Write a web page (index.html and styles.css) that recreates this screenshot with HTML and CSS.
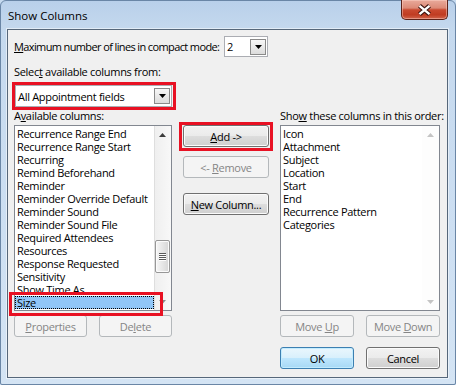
FILE: index.html
```html
<!DOCTYPE html>
<html>
<head>
<meta charset="utf-8">
<title>Show Columns</title>
<link rel="stylesheet" href="styles.css">
</head>
<body>
<div class="window">
  <div class="titlebar">
    <span class="title">Show Columns</span>
    <div class="close">
      <svg width="15" height="12" viewBox="0 0 15 12"><path d="M2.5 1.8 L12.5 10.2 M12.5 1.8 L2.5 10.2" stroke="#3a1410" stroke-width="4.4" fill="none"/><path d="M2.5 1.8 L12.5 10.2 M12.5 1.8 L2.5 10.2" stroke="#fff" stroke-width="2.4" fill="none"/></svg>
    </div>
  </div>
  <div class="client">
    <div class="row-max">
      <span class="lbl max-lbl"><u>M</u>aximum number of lines in compact mode:</span>
      <div class="combo small">
        <span class="val">2</span>
        <span class="dd"><svg width="7" height="4" viewBox="0 0 7 4"><path d="M0 0 H7 L3.5 4 Z" fill="#000"/></svg></span>
      </div>
    </div>
    <div class="lbl sel-lbl">Selec<u>t</u> available columns from:</div>
    <div class="combo wide hl hl-combo">
      <span class="val">All Appointment fields</span>
      <span class="dd"><svg width="7" height="4" viewBox="0 0 7 4"><path d="M0 0 H7 L3.5 4 Z" fill="#000"/></svg></span>
    </div>
    <div class="cols">
      <div class="col">
        <div class="lbl col-lbl">A<u>v</u>ailable columns:</div>
        <div class="list">
          <ul class="items">
            <li>Recurrence Range End</li>
            <li>Recurrence Range Start</li>
            <li>Recurring</li>
            <li>Remind Beforehand</li>
            <li>Reminder</li>
            <li>Reminder Override Default</li>
            <li>Reminder Sound</li>
            <li>Reminder Sound File</li>
            <li>Required Attendees</li>
            <li>Resources</li>
            <li>Response Requested</li>
            <li>Sensitivity</li>
            <li>Show Time As</li>
            <li class="sel">Size</li>
          </ul>
          <div class="sb">
            <div class="sb-btn"><svg width="7" height="4" viewBox="0 0 7 4"><path d="M0 4 L3.5 0 L7 4 Z" fill="#3c3c3c"/></svg></div>
            <div class="sb-track"><div class="thumb"><span class="grip"></span></div></div>
            <div class="sb-btn"><svg width="7" height="4" viewBox="0 0 7 4"><path d="M0 0 H7 L3.5 4 Z" fill="#8a8a8a"/></svg></div>
          </div>
          <div class="mark"></div>
        </div>
        <div class="btnrow">
          <div class="btn dis"><span><u>P</u>roperties</span></div>
          <div class="btn dis"><span>De<u>l</u>ete</span></div>
        </div>
      </div>
      <div class="col mid">
        <div class="btn hl hl-btn add"><span><u>A</u>dd -&gt;</span></div>
        <div class="btn dis remove"><span>&lt;- <u>R</u>emove</span></div>
        <div class="btn newcol"><span><u>N</u>ew Column...</span></div>
      </div>
      <div class="col">
        <div class="lbl col-lbl">Sho<u>w</u> these columns in this order:</div>
        <div class="list">
          <ul class="items">
            <li>Icon</li>
            <li>Attachment</li>
            <li>Subject</li>
            <li>Location</li>
            <li>Start</li>
            <li>End</li>
            <li>Recurrence Pattern</li>
            <li>Categories</li>
          </ul>
          <div class="sb dis">
            <div class="sb-btn"><svg width="7" height="4" viewBox="0 0 7 4"><path d="M0 4 L3.5 0 L7 4 Z" fill="#c4c4c4"/></svg></div>
            <div class="sb-track"></div>
            <div class="sb-btn"><svg width="7" height="4" viewBox="0 0 7 4"><path d="M0 0 H7 L3.5 4 Z" fill="#c4c4c4"/></svg></div>
          </div>
        </div>
        <div class="btnrow wide">
          <div class="btn dis"><span>Move <u>U</u>p</span></div>
          <div class="btn dis"><span>Move <u>D</u>own</span></div>
        </div>
        <div class="btnrow wide okrow">
          <div class="btn def"><span>OK</span></div>
          <div class="btn"><span>Cancel</span></div>
        </div>
      </div>
    </div>
  </div>
</div>
</body>
</html>
```
FILE: styles.css
```css
* { box-sizing: border-box; }
html, body { margin: 0; padding: 0; }
body {
  width: 456px;
  height: 385px;
  overflow: hidden;
  font-family: "Open Sans", "Noto Sans", sans-serif;
  font-size: 11px;
  letter-spacing: -0.3px;
  color: #000;
  background: #c6daef;
}
u { text-decoration: underline; text-underline-offset: 1px; }

.window {
  width: 456px;
  height: 385px;
  display: flex;
  flex-direction: column;
  padding: 0 7px 6px 6px;
  border: 1px solid #6a86a6;
  border-radius: 6px 6px 2px 2px;
  background: linear-gradient(180deg, #b9d0ea 0%, #c5d9ee 8%, #cddff2 60%, #d4e4f4 100%);
}
.titlebar {
  height: 28px;
  display: flex;
  justify-content: space-between;
  align-items: flex-start;
}
.title {
  padding: 7px 0 0 1px;
  font-size: 11.5px;
  letter-spacing: 0;
  line-height: 15px;
  color: #000;
}
.close {
  width: 47px;
  height: 20px;
  margin-top: -1px;
  border: 1px solid #5b2219;
  border-top: none;
  border-radius: 0 0 5px 5px;
  background: linear-gradient(180deg, #e9aa9b 0%, #dc8a77 42%, #c9492f 52%, #c03c22 78%, #d1654c 100%);
  box-shadow: inset 0 0 0 1px rgba(255, 214, 204, 0.45);
  display: flex;
  align-items: center;
  justify-content: center;
}

.client {
  flex: 1;
  display: flex;
  flex-direction: column;
  background: #f0f0f0;
  border: 1px solid #56677a;
  padding: 6px 7px 0 6px;
  box-shadow: 0 0 0 1px rgba(255, 255, 255, 0.5);
}
.lbl { white-space: nowrap; line-height: 15px; }

.row-max {
  display: flex;
  align-items: center;
  height: 21px;
}
.max-lbl { width: 210px; letter-spacing: -0.62px; }

.combo {
  position: relative;
  display: flex;
  align-items: center;
  background: #fff;
  border: 1px solid #abadb3;
}
.combo .val { flex: 1; padding-left: 2px; white-space: nowrap; }
.combo .dd {
  width: 16px;
  height: 16px;
  margin-right: 1px;
  border: 1px solid #8a8a8a;
  background: linear-gradient(180deg, #f7f7f7, #dcdcdc);
  display: flex;
  align-items: center;
  justify-content: center;
}
.combo.small { width: 44px; height: 21px; flex: none; }
.combo.wide { width: 157px; height: 22px; margin: 6px 0 0 1px; }

.sel-lbl { margin-top: 7px; }

.hl { position: relative; }
.hl::after {
  content: "";
  position: absolute;
  border: 3px solid #e81123;
  pointer-events: none;
}
.hl-combo::after { inset: -4px -5px -4px -4px; }
.hl-btn::after { inset: -4px -5px -5px -5px; }

.cols {
  display: grid;
  grid-template-columns: 158px 86px 160px;
  column-gap: 11px;
  margin-top: 1px;
}
.col { display: flex; flex-direction: column; }
.col-lbl { height: 15px; margin-bottom: 2px; }

.list {
  position: relative;
  height: 186px;
  border: 1px solid #828790;
  background: #fff;
  display: flex;
}
.items {
  flex: 1;
  min-width: 0;
  list-style: none;
  margin: 0;
  padding: 1px 0 0 0;
  overflow: hidden;
}
.items li {
  height: 13px;
  line-height: 13px;
  padding-left: 2px;
  white-space: nowrap;
}
.items li.sel {
  background: #91c6f7;
  outline: 1px dotted #000;
  outline-offset: -1px;
}

.sb {
  width: 17px;
  display: flex;
  flex-direction: column;
  background: linear-gradient(90deg, #dedede 0, #dedede 1px, #efefef 1px, #f8f8f8 100%);
}
.sb.dis { background: #fdfdfd; }
.sb-btn {
  height: 17px;
  display: flex;
  align-items: center;
  justify-content: center;
}
.sb-track { flex: 1; }
.thumb {
  margin: 97px 0 0 1px;
  width: 15px;
  height: 33px;
  border: 1px solid #979797;
  border-radius: 2px;
  background: linear-gradient(90deg, #f6f6f6 0%, #e6e6e6 50%, #d6d6d6 100%);
  box-shadow: inset 0 0 0 1px #fbfbfb;
  display: flex;
  align-items: center;
  justify-content: center;
}
.grip {
  width: 7px;
  height: 8px;
  background: repeating-linear-gradient(180deg, #5a5a5a 0 1px, #fdfdfd 1px 2px);
}

.mark {
  position: absolute;
  left: -6px;
  top: 166px;
  width: 154px;
  height: 24px;
  border: 3px solid #e81123;
  pointer-events: none;
}

.btn {
  height: 22px;
  display: flex;
  align-items: center;
  justify-content: center;
  border: 1px solid #707070;
  border-radius: 3px;
  background: linear-gradient(180deg, #f2f2f2 0%, #ebebeb 48%, #dddddd 52%, #cfcfcf 100%);
  box-shadow: inset 0 0 0 1px #fbfbfb;
  white-space: nowrap;
  line-height: 15px;
}
.btn.dis {
  border-color: #b4b8bb;
  background: #f4f4f4;
  box-shadow: none;
  color: #858585;
}
.btn.def {
  border-color: #3c7fb1;
  background: linear-gradient(180deg, #eaf6fd 0%, #d9f0fc 48%, #bee6fd 52%, #a7d9f5 100%);
  box-shadow: inset 0 0 0 1px #c3ecfe;
}

.btnrow {
  display: grid;
  grid-template-columns: 73px 73px;
  justify-content: space-between;
  margin-top: 4px;
}
.btnrow.wide { grid-template-columns: 74px 74px; }
.btnrow.okrow { margin-top: 10px; }

.mid .add { margin-top: 17px; }
.mid .remove { margin-top: 9px; }
.mid .newcol { margin-top: 15px; }
```
